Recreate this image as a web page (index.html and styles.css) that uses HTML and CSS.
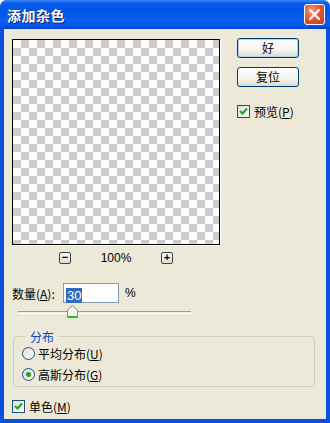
FILE: index.html
```html
<!DOCTYPE html>
<html lang="zh-CN">
<head>
<meta charset="UTF-8" />
<title>添加杂色</title>
<link rel="stylesheet" href="styles.css">
</head>
<body>
<div class="window">
<div class="title-bar">
<span class="title">添加杂色</span>
<span class="close-btn">
<svg width="13" height="13" viewBox="0 0 13 13"><path d="M2 2 L11 11 M11 2 L2 11" stroke="#fff" stroke-width="2.2" stroke-linecap="round"/></svg>
</span>
</div>

<div class="dialog">
<div class="top-row">
<div class="preview-col">
<div class="preview"></div>
<div class="zoom-row">
<span class="zoom-btn">&minus;</span>
<span class="zoom-val">100%</span>
<span class="zoom-btn">+</span>
</div>
</div>
<div class="side">
<button class="btn">好</button>
<button class="btn">复位</button>
<label class="check side-check"><span class="box checked"><svg width="9" height="9" viewBox="0 0 9 9"><path d="M1 4 L3.5 6.5 L8 1.5" stroke="#21a121" stroke-width="2" fill="none"/></svg></span><span>预览(<u>P</u>)</span></label>
</div>
</div>

<div class="amount-row">
<span class="amount-label">数量(<u>A</u>):</span>
<span class="amount-input"><span class="sel">30</span></span>
<span class="pct">%</span>
</div>

<div class="slider">
<div class="track"></div>
<svg class="thumb" width="11" height="14" viewBox="0 0 11 14">
<path d="M0.5 5 L5.5 0.5 L10.5 5 L10.5 12.5 L0.5 12.5 Z" fill="#f4f4ef" stroke="#8a8a7a"/>
<rect x="1" y="11" width="9" height="2" fill="#21c121"/>
</svg>
</div>

<fieldset class="group">
<legend>分布</legend>
<label class="radio"><span class="circle"></span><span>平均分布(<u>U</u>)</span></label>
<label class="radio"><span class="circle on"></span><span>高斯分布(<u>G</u>)</span></label>
</fieldset>

<label class="check mono"><span class="box checked"><svg width="9" height="9" viewBox="0 0 9 9"><path d="M1 4 L3.5 6.5 L8 1.5" stroke="#21a121" stroke-width="2" fill="none"/></svg></span><span>单色(<u>M</u>)</span></label>
</div>
</div>
</body>
</html>
```

FILE: styles.css
```css
* {
box-sizing: border-box;
margin: 0;
padding: 0;
}

body {
width: 330px;
height: 423px;
overflow: hidden;
font-family: "Noto Sans CJK SC", "Liberation Sans", sans-serif;
font-size: 12px;
color: #000;
}

.window {
width: 330px;
height: 423px;
display: flex;
flex-direction: column;
background: #0a4fe0;
border-radius: 7px 7px 0 0;
padding: 0 4px 4px 4px;
}

.title-bar {
height: 29px;
margin: 0 -4px;
padding: 0 5px 0 7px;
display: flex;
align-items: center;
justify-content: space-between;
border-radius: 7px 7px 0 0;
background: linear-gradient(#3c8cf8 0, #0e5ded 10%, #0055e8 35%, #0a5ff0 70%, #0058ea 88%, #003fd0 100%);
}

.title {
color: #fff;
font-weight: bold;
font-size: 14px;
text-shadow: 1px 1px 0 #0a1c6e;
letter-spacing: 0.5px;
}

.close-btn {
width: 21px;
height: 21px;
border: 1px solid #fff;
border-radius: 3px;
background: radial-gradient(circle at 35% 30%, #f39c7c 0, #e35a35 45%, #c2351a 100%);
display: flex;
align-items: center;
justify-content: center;
}

.dialog {
flex: 1;
background: #ece9d8;
padding: 10px 8px 0 8px;
display: flex;
flex-direction: column;
}

.top-row {
display: flex;
}

.preview {
width: 208px;
height: 206px;
border: 1px solid #000;
box-shadow: 1px 1px 0 #fff;
background-color: #fff;
background-image:
linear-gradient(45deg, #ccc 25%, transparent 25%, transparent 75%, #ccc 75%),
linear-gradient(45deg, #ccc 25%, transparent 25%, transparent 75%, #ccc 75%);
background-size: 16px 16px;
background-position: 0 0, 8px 8px;
}

.zoom-row {
display: flex;
align-items: center;
justify-content: space-between;
width: 114px;
margin: 6px 0 0 47px;
height: 13px;
}

.zoom-btn {
width: 12px;
height: 12px;
border: 1px solid #38424f;
border-radius: 2px;
background: linear-gradient(#fff, #dcdcd2);
font-size: 11px;
line-height: 9px;
text-align: center;
font-family: "Liberation Sans", sans-serif;
font-weight: bold;
}

.zoom-val {
font-family: "Liberation Sans", sans-serif;
font-size: 12px;
}

.side {
margin-left: 17px;
display: flex;
flex-direction: column;
}

.btn {
width: 62px;
height: 20px;
margin-top: -1px;
border: 1px solid #003c74;
border-radius: 3px;
background: linear-gradient(#fff 0, #f5f4ee 60%, #dcdad0 100%);
box-shadow: inset 0 0 0 1px #b8d0f8;
font-family: "Noto Sans CJK SC", sans-serif;
font-size: 12px;
line-height: 16px;
}

.btn + .btn {
margin-top: 9px;
box-shadow: none;
}

.check {
display: flex;
align-items: center;
gap: 4px;
}

.side-check {
margin-top: 16px;
}

.box {
width: 13px;
height: 13px;
border: 1px solid #1c5180;
background: linear-gradient(135deg, #dcdcd7, #fff);
display: flex;
align-items: center;
justify-content: center;
}

.amount-row {
display: flex;
align-items: center;
margin-top: 19px;
}

.amount-label {
width: 51px;
}

.amount-input {
width: 56px;
height: 20px;
border: 1px solid #7f9db9;
background: #fff;
padding: 2px 0 0 2px;
}

.sel {
display: inline-block;
background: #316ac5;
color: #fff;
font-family: "Liberation Sans", sans-serif;
font-size: 13px;
line-height: 15px;
padding: 0 1px;
}

.pct {
margin-left: 6px;
font-family: "Liberation Sans", sans-serif;
}

.slider {
position: relative;
height: 18px;
margin: 1px 0 0 6px;
width: 173px;
}

.track {
margin-top: 7px;
height: 3px;
border-top: 1px solid #9d9c92;
border-bottom: 1px solid #fff;
background: #ece9d8;
}

.thumb {
position: absolute;
left: 49px;
top: 1px;
}

.group {
margin: 8px 3px 0 1px;
height: 57px;
border: 1px solid #d0d0bf;
border-radius: 3px;
padding: 2px 0 0 8px;
display: flex;
flex-direction: column;
gap: 4px;
}

.group legend {
color: #0046d5;
padding: 0 4px;
margin-left: 4px;
line-height: 13px;
}

.radio {
display: flex;
align-items: center;
gap: 3px;
height: 17px;
}

.circle {
width: 13px;
height: 13px;
border-radius: 50%;
border: 1px solid #1c5180;
background: linear-gradient(135deg, #dcdcd7, #fff);
display: flex;
align-items: center;
justify-content: center;
}

.circle.on::after {
content: "";
width: 5px;
height: 5px;
border-radius: 50%;
background: #21a121;
}

.mono {
margin-top: 11px;
}
```
